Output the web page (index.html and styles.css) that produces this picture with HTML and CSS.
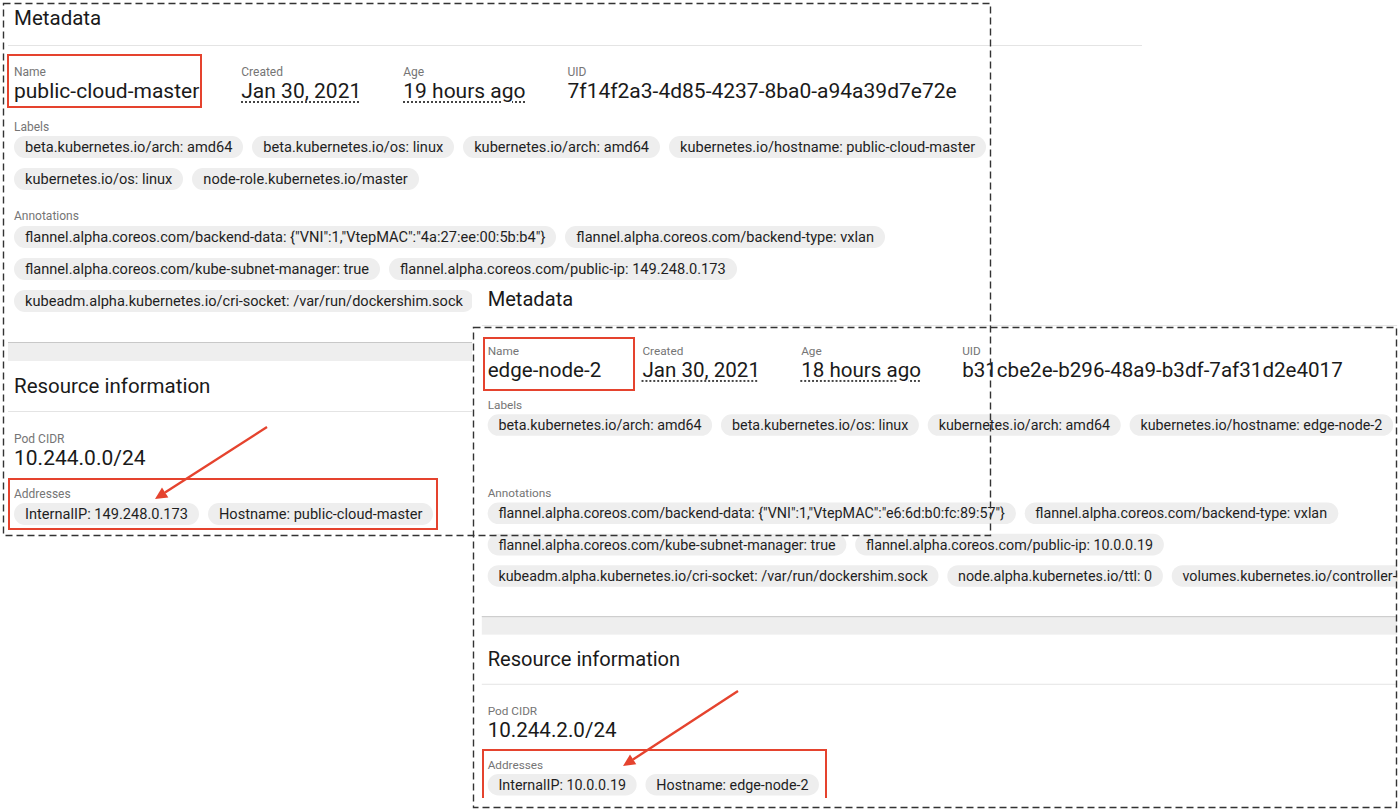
FILE: index.html
```html
<!DOCTYPE html>
<html lang="en">
<head>
<meta charset="utf-8">
<title>Node metadata comparison</title>
<link rel="stylesheet" href="styles.css">
</head>
<body>
<div class="canvas">

  <section class="shot shot-a">
    <div class="card">
      <h2 class="card-title">Metadata</h2>
      <div class="card-body">
        <div class="field-row">
          <div class="field"><div class="label">Name</div><div class="value">public-cloud-master</div></div>
          <div class="field"><div class="label">Created</div><div class="value"><span class="dotted">Jan 30, 2021</span></div></div>
          <div class="field"><div class="label">Age</div><div class="value"><span class="dotted">19 hours ago</span></div></div>
          <div class="field"><div class="label">UID</div><div class="value">7f14f2a3-4d85-4237-8ba0-a94a39d7e72e</div></div>
        </div>
        <div class="label section-label">Labels</div>
        <div class="chips">
          <div class="chip-row">
            <span class="chip">beta.kubernetes.io/arch: amd64</span>
            <span class="chip">beta.kubernetes.io/os: linux</span>
            <span class="chip">kubernetes.io/arch: amd64</span>
            <span class="chip">kubernetes.io/hostname: public-cloud-master</span>
          </div>
          <div class="chip-row">
            <span class="chip">kubernetes.io/os: linux</span>
            <span class="chip">node-role.kubernetes.io/master</span>
          </div>
        </div>
        <div class="label section-label annot-label">Annotations</div>
        <div class="chips annot-chips">
          <div class="chip-row">
            <span class="chip">flannel.alpha.coreos.com/backend-data: {"VNI":1,"VtepMAC":"4a:27:ee:00:5b:b4"}</span>
            <span class="chip">flannel.alpha.coreos.com/backend-type: vxlan</span>
          </div>
          <div class="chip-row">
            <span class="chip">flannel.alpha.coreos.com/kube-subnet-manager: true</span>
            <span class="chip">flannel.alpha.coreos.com/public-ip: 149.248.0.173</span>
          </div>
          <div class="chip-row">
            <span class="chip">kubeadm.alpha.kubernetes.io/cri-socket: /var/run/dockershim.sock</span>
          </div>
        </div>
      </div>
    </div>
    <div class="band"></div>
    <div class="card">
      <h2 class="card-title res-title">Resource information</h2>
      <div class="card-body">
        <div class="label cidr-label">Pod CIDR</div>
        <div class="value">10.244.0.0/24</div>
        <div class="label section-label">Addresses</div>
        <div class="chips">
          <div class="chip-row">
            <span class="chip">InternalIP: 149.248.0.173</span>
            <span class="chip">Hostname: public-cloud-master</span>
          </div>
        </div>
      </div>
    </div>
  </section>

  <section class="shot shot-b">
    <div class="card">
      <h2 class="card-title">Metadata</h2>
      <div class="card-body">
        <div class="field-row">
          <div class="field"><div class="label">Name</div><div class="value">edge-node-2</div></div>
          <div class="field"><div class="label">Created</div><div class="value"><span class="dotted">Jan 30, 2021</span></div></div>
          <div class="field"><div class="label">Age</div><div class="value"><span class="dotted">18 hours ago</span></div></div>
          <div class="field"><div class="label">UID</div><div class="value">b31cbe2e-b296-48a9-b3df-7af31d2e4017</div></div>
        </div>
        <div class="label section-label">Labels</div>
        <div class="chips">
          <div class="chip-row">
            <span class="chip">beta.kubernetes.io/arch: amd64</span>
            <span class="chip">beta.kubernetes.io/os: linux</span>
            <span class="chip">kubernetes.io/arch: amd64</span>
            <span class="chip">kubernetes.io/hostname: edge-node-2</span>
          </div>
          <div class="chip-row empty-row"></div>
        </div>
        <div class="label section-label annot-label">Annotations</div>
        <div class="chips annot-chips">
          <div class="chip-row">
            <span class="chip">flannel.alpha.coreos.com/backend-data: {"VNI":1,"VtepMAC":"e6:6d:b0:fc:89:57"}</span>
            <span class="chip">flannel.alpha.coreos.com/backend-type: vxlan</span>
          </div>
          <div class="chip-row">
            <span class="chip">flannel.alpha.coreos.com/kube-subnet-manager: true</span>
            <span class="chip">flannel.alpha.coreos.com/public-ip: 10.0.0.19</span>
          </div>
          <div class="chip-row">
            <span class="chip">kubeadm.alpha.kubernetes.io/cri-socket: /var/run/dockershim.sock</span>
            <span class="chip">node.alpha.kubernetes.io/ttl: 0</span>
            <span class="chip">volumes.kubernetes.io/controller-managed-attach-detach: true</span>
          </div>
        </div>
      </div>
    </div>
    <div class="band"></div>
    <div class="card">
      <h2 class="card-title res-title">Resource information</h2>
      <div class="card-body">
        <div class="label cidr-label">Pod CIDR</div>
        <div class="value">10.244.2.0/24</div>
        <div class="label section-label">Addresses</div>
        <div class="chips">
          <div class="chip-row">
            <span class="chip">InternalIP: 10.0.0.19</span>
            <span class="chip">Hostname: edge-node-2</span>
          </div>
        </div>
      </div>
    </div>
  </section>

  <svg class="marks" width="1400" height="811" viewBox="0 0 1400 811" aria-hidden="true">
    <g class="dash">
      <rect x="3.5" y="3.5" width="987" height="532"/>
      <rect x="473.5" y="327.5" width="923" height="480"/>
    </g>
    <g class="red-box">
      <rect x="8" y="55" width="193" height="52"/>
      <rect x="9" y="479" width="428" height="50"/>
      <rect x="484" y="338" width="150" height="52"/>
      <path d="M483 798 V750 H826 V798"/>
    </g>
    <g class="arrow">
      <line x1="267" y1="427" x2="165" y2="492.5"/>
      <polygon points="155,499 168.3,497.4 162,487.6"/>
      <line x1="738" y1="691" x2="633" y2="759.4"/>
      <polygon points="623,766 636.3,764.3 630,754.6"/>
    </g>
  </svg>
</div>
</body>
</html>
```

FILE: styles.css
```css
html, body {
  margin: 0;
  padding: 0;
  background: #ffffff;
}

body {
  font-family: Roboto, "Noto Sans", "Liberation Sans", sans-serif;
  color: #212121;
  overflow: hidden;
}

.canvas {
  position: relative;
  width: 1400px;
  height: 811px;
  overflow: hidden;
  background: #ffffff;
}

/* two pasted screenshots, placed like windows on a canvas */
.shot {
  position: absolute;
  background: #ffffff;
  overflow: hidden;
}

.shot-a {
  left: 0;
  top: 0;
  width: 1150px;
}

.shot-a .card,
.shot-a .band {
  margin-left: 8px;
  width: 1134px;
}

.shot-b {
  left: 472px;
  top: 281px;
  width: 944px;
  height: 541px;
  transform: scale(0.98);
  transform-origin: 0 0;
}

.shot-b .card,
.shot-b .band {
  margin-left: 10px;
  width: 1180px;
}

.card {
  background: #ffffff;
}

.card-title {
  margin: 0;
  font-size: 20.5px;
  line-height: 24px;
  font-weight: 400;
  padding: 6px 6px 15px;
  border-bottom: 1px solid #e4e4e4;
  color: #1a1a1a;
}

.res-title {
  padding-top: 13px;
  padding-bottom: 13px;
}

.card-body {
  padding: 0 6px 30px;
}

.field-row {
  display: flex;
  gap: 42px;
  margin-top: 19px;
}

.label {
  font-size: 12px;
  line-height: 14px;
  color: #757575;
}

.value {
  font-size: 21px;
  line-height: 24px;
  color: #1a1a1a;
  white-space: nowrap;
}

.dotted {
  text-decoration: underline dotted #444;
  text-decoration-thickness: 2px;
  text-underline-offset: 3px;
}

.section-label {
  margin-top: 17px;
}

.annot-label {
  margin-top: 19px;
}

.cidr-label {
  margin-top: 20px;
}

.chips {
  display: flex;
  flex-direction: column;
  gap: 10px;
  margin-top: 2px;
}

.annot-chips {
  margin-top: 3px;
}

.chip-row {
  display: flex;
  gap: 9px;
}

.empty-row {
  height: 22px;
}

.chip {
  display: inline-block;
  height: 22px;
  line-height: 22px;
  padding: 0 11px;
  border-radius: 11px;
  background: #eeeeee;
  font-size: 14.6px;
  color: #1f1f1f;
  white-space: nowrap;
}

.band {
  height: 18px;
  background: #eeeeee;
  border-top: 1px solid #c8c8c8;
}

/* annotation layer drawn over the screenshots */
.marks {
  position: absolute;
  left: 0;
  top: 0;
  pointer-events: none;
}

.dash rect {
  fill: none;
  stroke: #333333;
  stroke-width: 1.4;
  stroke-dasharray: 7 4;
}

.red-box rect,
.red-box path {
  fill: none;
  stroke: #e5432e;
  stroke-width: 2;
}

.arrow line {
  stroke: #e5432e;
  stroke-width: 2.4;
}

.arrow polygon {
  fill: #e5432e;
}
```
